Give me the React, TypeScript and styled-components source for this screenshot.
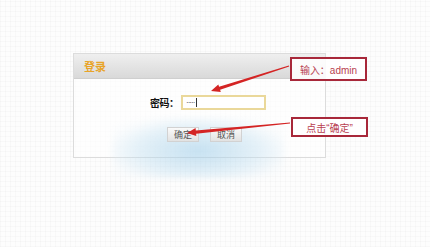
import React from "react";
import styled, { createGlobalStyle } from "styled-components";

const Global = createGlobalStyle`
  html, body { margin: 0; padding: 0; }
  body {
    width: 430px;
    height: 247px;
    overflow: hidden;
    font-family: "Liberation Sans", "Noto Sans CJK SC", sans-serif;
  }
`;

const Stage = styled.div`
  position: relative;
  width: 430px;
  height: 247px;
  box-sizing: border-box;
  padding: 53px 0 0 73px;
  background-color: #fdfdfd;
  background-image:
    repeating-linear-gradient(0deg, rgba(0,0,0,0.018) 0 1px, transparent 1px 5px),
    repeating-linear-gradient(90deg, rgba(0,0,0,0.018) 0 1px, transparent 1px 5px);
  overflow: hidden;
`;

const Glow = styled.div`
  position: absolute;
  left: 112px;
  top: 118px;
  width: 172px;
  height: 60px;
  background: radial-gradient(ellipse at 50% 55%, rgba(160,205,232,0.6), rgba(190,222,240,0.4) 50%, rgba(235,245,252,0.2) 75%, rgba(255,255,255,0) 90%);
  filter: blur(3px);
`;

const Dialog = styled.div`
  position: relative;
  width: 253px;
  height: 105px;
  box-sizing: border-box;
  border: 1px solid #dcdcdc;
  background: rgba(255,255,255,0.6);
  display: flex;
  flex-direction: column;
`;

const Header = styled.div`
  height: 25px;
  box-sizing: border-box;
  padding-left: 10px;
  display: flex;
  align-items: center;
  background: linear-gradient(#efefef, #d9d9d9);
  border-bottom: 1px solid #cfcfcf;
  color: #e8a428;
  font-size: 11px;
  font-weight: bold;
`;

const Body = styled.div`
  flex: 1;
  display: flex;
  flex-direction: column;
  align-items: flex-start;
  padding: 16px 0 0 76px;
  gap: 17px;
`;

const Row = styled.div`
  display: flex;
  align-items: center;
`;

const Label = styled.span`
  width: 31px;
  font-size: 10px;
  font-weight: bold;
  color: #111;
  letter-spacing: -0.5px;
  white-space: nowrap;
`;

const Input = styled.div`
  width: 85px;
  height: 15px;
  box-sizing: border-box;
  border: 2px solid #ead89a;
  background: #fff;
  display: flex;
  align-items: center;
  padding-left: 3px;
  font-size: 8px;
  color: #333;
  letter-spacing: -1px;
`;

const Caret = styled.span`
  display: inline-block;
  width: 1px;
  height: 9px;
  background: #333;
  margin-left: 2px;
`;

const Buttons = styled.div`
  display: flex;
  gap: 11px;
  padding-left: 17px;
  position: relative;
  z-index: 1;
`;

const Button = styled.div`
  width: 32px;
  height: 15px;
  box-sizing: border-box;
  border: 1px solid #d2d2d2;
  background: linear-gradient(#fafafa, #e2e2e2);
  display: flex;
  align-items: center;
  justify-content: center;
  font-size: 9px;
  color: #555;
`;

const Note = styled.div<{ x: number; y: number; h: number }>`
  position: absolute;
  left: ${p => p.x}px;
  top: ${p => p.y}px;
  width: 77px;
  height: ${p => p.h}px;
  box-sizing: border-box;
  border: 2px solid #a8283a;
  background: rgba(255,255,255,0.85);
  display: flex;
  align-items: center;
  justify-content: center;
  font-size: 10px;
  color: #b84050;
  z-index: 2;
`;

const Arrows = styled.svg`
  position: absolute;
  left: 0;
  top: 0;
  z-index: 3;
`;

function Arrow({ x1, y1, x2, y2 }: { x1: number; y1: number; x2: number; y2: number }) {
  const dx = x2 - x1;
  const dy = y2 - y1;
  const len = Math.hypot(dx, dy);
  const ux = dx / len;
  const uy = dy / len;
  const nx = -uy;
  const ny = ux;
  const headLen = 9;
  const bx = x2 - ux * headLen;
  const by = y2 - uy * headLen;
  const pts = [
    [x1 + nx * 0.5, y1 + ny * 0.5],
    [bx + nx * 1.6, by + ny * 1.6],
    [bx + nx * 4, by + ny * 4],
    [x2, y2],
    [bx - nx * 4, by - ny * 4],
    [bx - nx * 1.6, by - ny * 1.6],
    [x1 - nx * 0.5, y1 - ny * 0.5],
  ]
    .map(p => p.map(v => v.toFixed(1)).join(","))
    .join(" ");
  return <polygon points={pts} fill="#d42424" />;
}

export default function App() {
  return (
    <>
      <Global />
      <Stage>
        <Dialog>
          <Header>登录</Header>
          <Body>
            <Row>
              <Label>密码：</Label>
              <Input>
                ·····<Caret />
              </Input>
            </Row>
            <Buttons>
              <Button>确定</Button>
              <Button>取消</Button>
            </Buttons>
          </Body>
        </Dialog>
        <Glow />
        <Note x={290} y={57} h={24}>输入：admin</Note>
        <Note x={291} y={117} h={20}>点击“确定”</Note>
        <Arrows width={430} height={247}>
          <Arrow x1={289} y1={66} x2={211} y2={91} />
          <Arrow x1={290} y1={123} x2={187} y2={133} />
        </Arrows>
      </Stage>
    </>
  );
}
